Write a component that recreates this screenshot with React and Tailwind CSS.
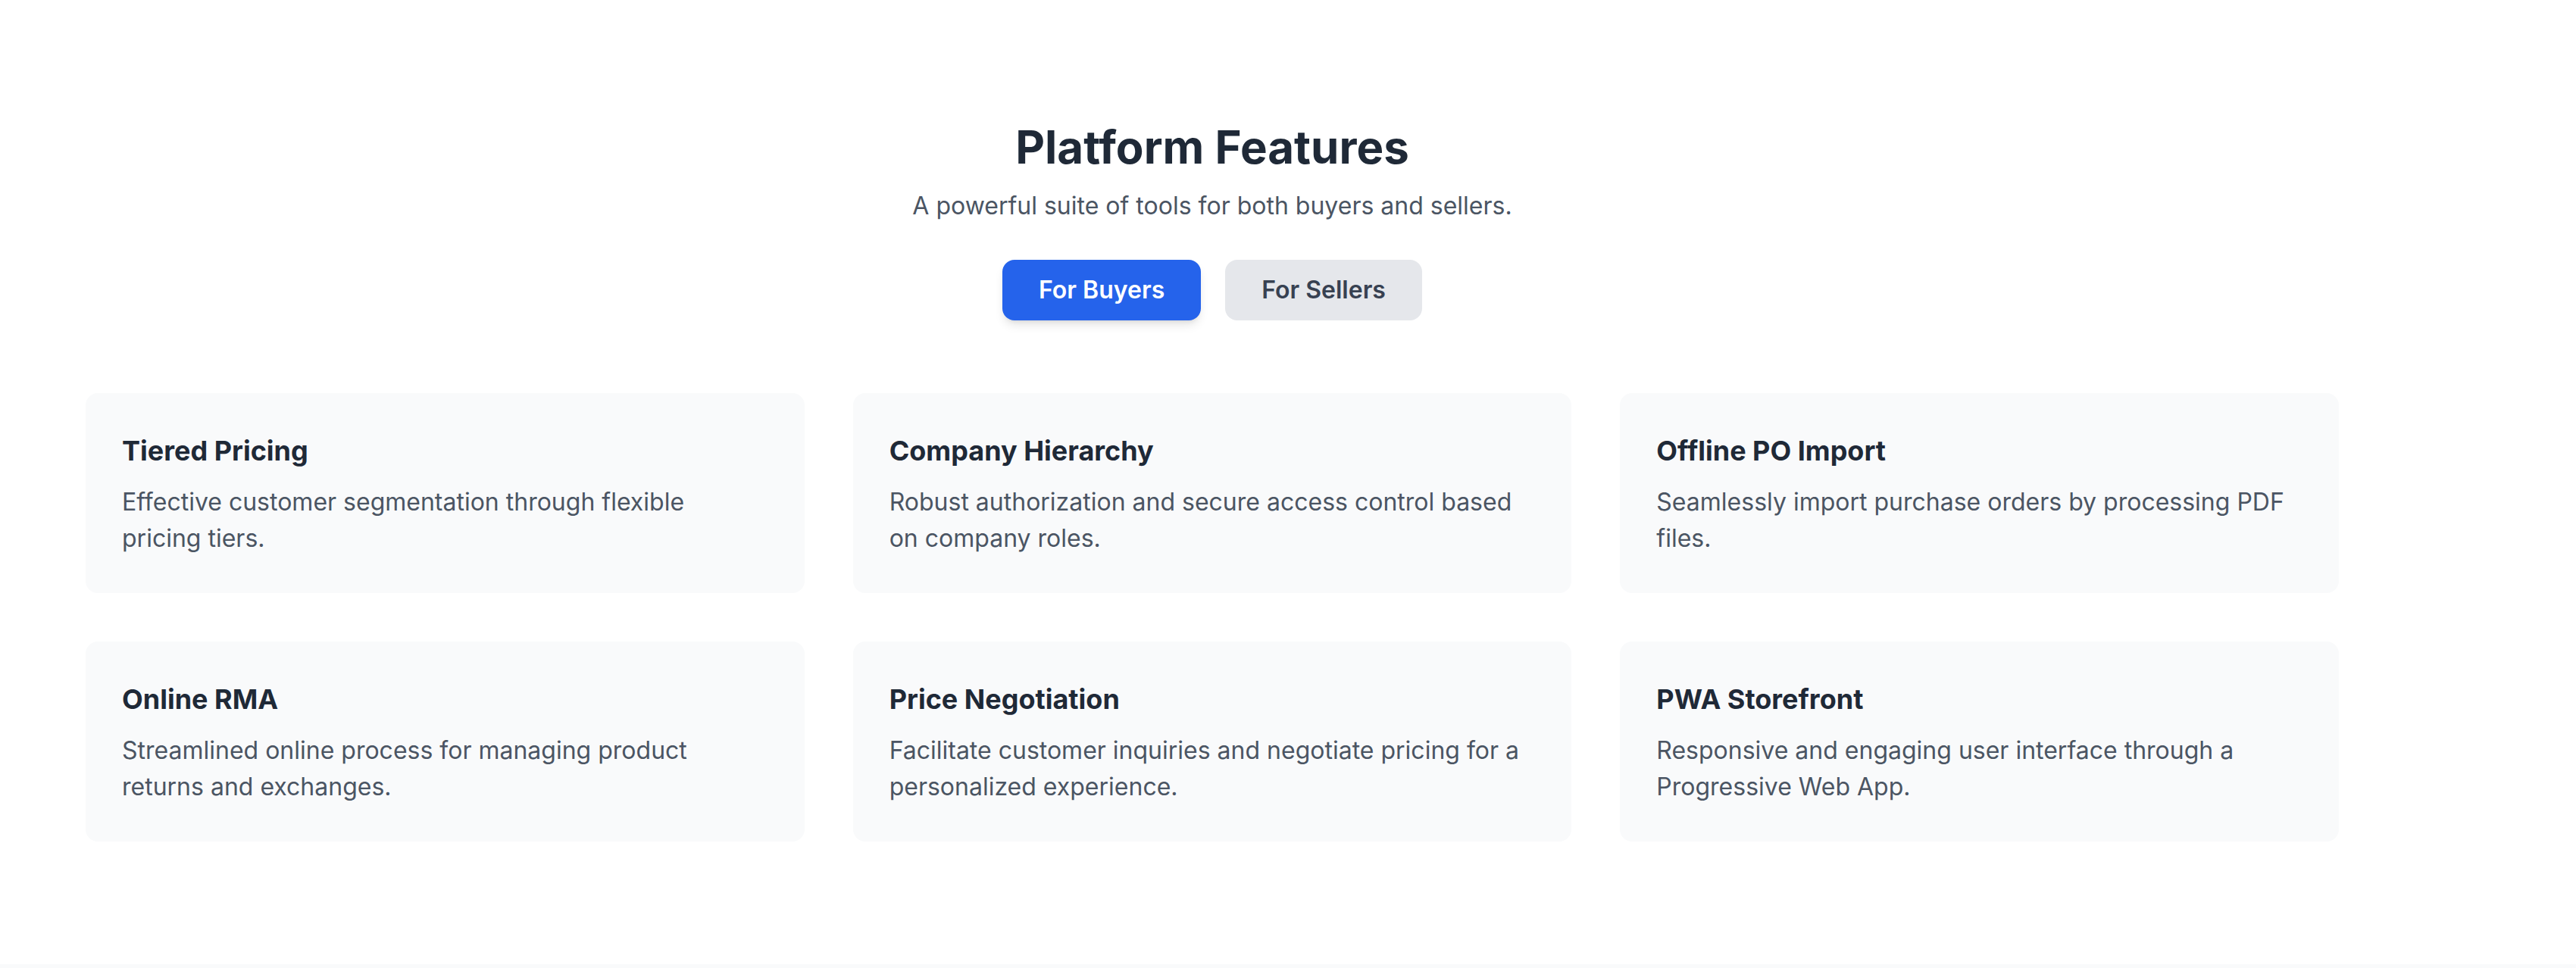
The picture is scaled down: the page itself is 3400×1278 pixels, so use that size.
import React, { useState } from "react";

const features = {
  buyers: [
    {
      title: "Tiered Pricing",
      text: "Effective customer segmentation through flexible pricing tiers.",
    },
    {
      title: "Company Hierarchy",
      text: "Robust authorization and secure access control based on company roles.",
    },
    {
      title: "Offline PO Import",
      text: "Seamlessly import purchase orders by processing PDF files.",
    },
    {
      title: "Online RMA",
      text: "Streamlined online process for managing product returns and exchanges.",
    },
    {
      title: "Price Negotiation",
      text: "Facilitate customer inquiries and negotiate pricing for a personalized experience.",
    },
    {
      title: "PWA Storefront",
      text: "Responsive and engaging user interface through a Progressive Web App.",
    },
  ],
  sellers: [],
};

function FeatureCard({ title, text }) {
  return (
    <div className="rounded-[16px] bg-[#f9fafb] p-12">
      <h3 className="text-[36px] font-bold leading-[56px] text-[#1f2937]">{title}</h3>
      <p className="mt-4 text-[32px] leading-[48px] text-[#4b5563]">{text}</p>
    </div>
  );
}

export default function App() {
  const [tab, setTab] = useState("buyers");
  const list = features[tab].length ? features[tab] : features.buyers;

  return (
    <div className="min-h-screen bg-[#f9fafb] font-['Inter',sans-serif]">
      <section className="bg-white pt-[158px] pb-[162px]">
        <div className="w-[3200px] px-[113px]">
          <div className="flex flex-col items-center text-center">
            <h2 className="text-[60px] font-bold leading-[72px] text-[#1f2937]">Platform Features</h2>
            <p className="mt-[18px] text-[32px] leading-[48px] text-[#4b5563]">
              A powerful suite of tools for both buyers and sellers.
            </p>
            <div className="mt-[47px] flex gap-8">
              <button
                type="button"
                onClick={() => setTab("buyers")}
                className={
                  tab === "buyers"
                    ? "rounded-[16px] bg-[#2563eb] px-12 py-4 text-[32px] font-semibold leading-[48px] text-white shadow-[0_8px_14px_-3px_rgba(0,0,0,0.12),0_4px_6px_-4px_rgba(0,0,0,0.1)]"
                    : "rounded-[16px] bg-[#e5e7eb] px-12 py-4 text-[32px] font-semibold leading-[48px] text-[#374151]"
                }
              >
                For Buyers
              </button>
              <button
                type="button"
                onClick={() => setTab("sellers")}
                className={
                  tab === "sellers"
                    ? "rounded-[16px] bg-[#2563eb] px-12 py-4 text-[32px] font-semibold leading-[48px] text-white shadow-[0_8px_14px_-3px_rgba(0,0,0,0.12),0_4px_6px_-4px_rgba(0,0,0,0.1)]"
                    : "rounded-[16px] bg-[#e5e7eb] px-12 py-4 text-[32px] font-semibold leading-[48px] text-[#374151]"
                }
              >
                For Sellers
              </button>
            </div>
          </div>

          <div className="mt-[96px] grid grid-cols-3 gap-16">
            {list.map((f) => (
              <FeatureCard key={f.title} title={f.title} text={f.text} />
            ))}
          </div>
        </div>
      </section>
    </div>
  );
}
